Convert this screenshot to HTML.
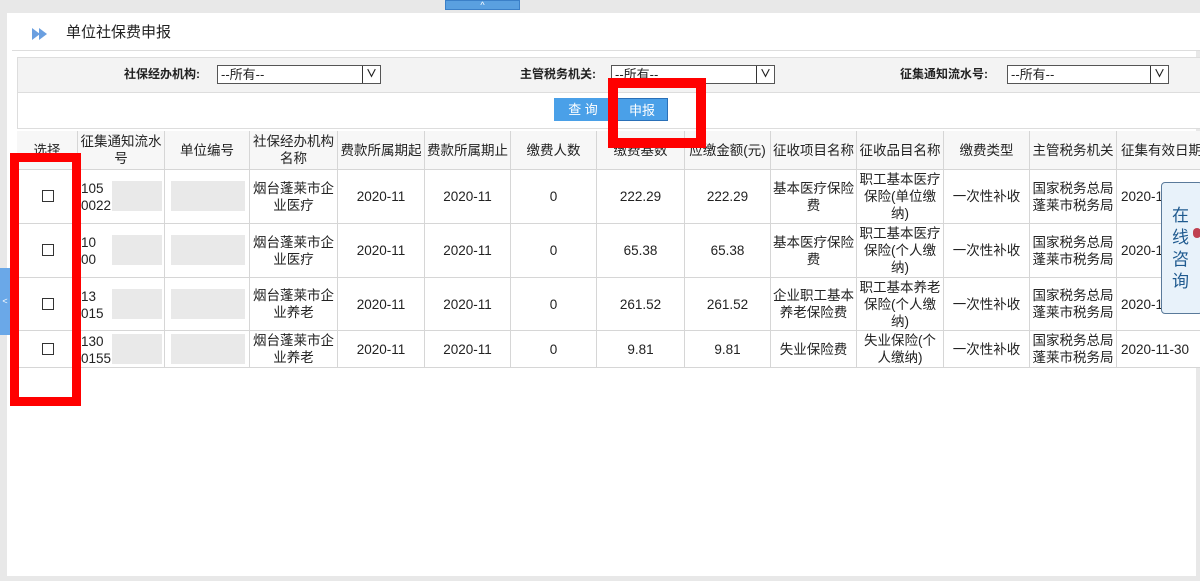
<!DOCTYPE html>
<html><head><meta charset="utf-8"><style>
*{margin:0;padding:0;box-sizing:border-box}
body{width:1200px;height:581px;overflow:hidden;background:#e8e8e8;position:relative;font-family:"Liberation Sans","Noto Sans CJK SC",sans-serif;color:#222}
.a{position:absolute}
.cell{position:absolute;display:flex;align-items:center;justify-content:center;text-align:center;font-size:13.5px;line-height:17px;border-right:1px solid #d6d6d6}
.blur{position:absolute;background:#e2e2e2;opacity:.75}
.sel{position:absolute;height:19px;border:1px solid #555;background:#fff;font-size:13px;line-height:17px;padding-left:3px}
.sel i{position:absolute;right:0;top:0;width:18px;height:17px;border-left:1px solid #333;font-style:normal;font-size:11px;text-align:center;line-height:17px;font-weight:bold}
.lbl{position:absolute;font-size:12px;font-weight:bold;line-height:19px}
.cb{position:absolute;width:12px;height:12px;border:1.5px solid #333;background:#fff}
</style></head><body>
<div class="a" style="left:445px;top:0;width:75px;height:10px;background:#5aa0e0;border:1px solid #3b80c8;color:#fff;font-size:9px;text-align:center;line-height:8px">^</div>
<div class="a" style="left:7px;top:13px;width:1189px;height:563px;background:#fff"></div>
<div class="a" style="left:12px;top:13px;width:1188px;height:38px;background:#fff;border-bottom:1px solid #ddd"></div>
<svg class="a" style="left:31px;top:27px" width="18" height="14"><path d="M1 1 L9 7 L1 13Z" fill="#6a9fe0"/><path d="M8 1 L16 7 L8 13Z" fill="#6a9fe0"/></svg>
<div class="a" style="left:66px;top:23px;font-size:15px;line-height:20px">单位社保费申报</div>
<div class="a" style="left:17px;top:57px;width:1183px;height:36px;background:#f3f3f3;border:1px solid #ddd;border-right:none"></div>
<div class="a" style="left:17px;top:93px;width:1183px;height:36px;background:#fff;border:1px solid #ddd;border-top:none;border-right:none"></div>
<div class="lbl" style="left:124px;top:65px">社保经办机构:</div>
<div class="sel" style="left:217px;top:65px;width:164px">--所有--<i>∨</i></div>
<div class="lbl" style="left:520px;top:65px">主管税务机关:</div>
<div class="sel" style="left:611px;top:65px;width:164px">--所有--<i>∨</i></div>
<div class="lbl" style="left:900px;top:65px">征集通知流水号:</div>
<div class="sel" style="left:1007px;top:65px;width:162px">--所有--<i>∨</i></div>
<div class="a" style="left:554px;top:98px;width:58px;height:23px;background:#4aa0e8;color:#fff;font-size:13px;text-align:center;line-height:23px">查 询</div>
<div class="a" style="left:616px;top:98px;width:52px;height:23px;background:#4aa0e8;color:#fff;font-size:13px;text-align:center;line-height:23px;border:1px solid #2a70b8">申报</div>
<div class="a" style="left:17px;top:131px;width:1183px;height:237px;border-top:1px solid #ccc"></div>
<div id="t"></div>
<script>
var xs=[17,78,165,250,338,425,511,597,685,771,857,944,1030,1117,1220];
var ys=[131,170,224,278,331,368];
var hd=["选择","征集通知流水<br>号","单位编号","社保经办机构<br>名称","费款所属期起","费款所属期止","缴费人数","缴费基数","应缴金额(元)","征收项目名称","征收品目名称","缴费类型","主管税务机关","征集有效日期"];
var rows=[
["","","","烟台蓬莱市企<br>业医疗","2020-11","2020-11","0","222.29","222.29","基本医疗保险<br>费","职工基本医疗<br>保险(单位缴<br>纳)","一次性补收","国家税务总局<br>蓬莱市税务局","2020-11-30"],
["","","","烟台蓬莱市企<br>业医疗","2020-11","2020-11","0","65.38","65.38","基本医疗保险<br>费","职工基本医疗<br>保险(个人缴<br>纳)","一次性补收","国家税务总局<br>蓬莱市税务局","2020-11-30"],
["","","","烟台蓬莱市企<br>业养老","2020-11","2020-11","0","261.52","261.52","企业职工基本<br>养老保险费","职工基本养老<br>保险(个人缴<br>纳)","一次性补收","国家税务总局<br>蓬莱市税务局","2020-11-30"],
["","","","烟台蓬莱市企<br>业养老","2020-11","2020-11","0","9.81","9.81","失业保险费","失业保险(个<br>人缴纳)","一次性补收","国家税务总局<br>蓬莱市税务局","2020-11-30"]];
var h="";
function row(cells,y0,y1,bg){for(var i=0;i<14;i++){h+='<div class="cell" style="left:'+xs[i]+'px;top:'+y0+'px;width:'+(xs[i+1]-xs[i])+'px;height:'+(y1-y0)+'px;border-bottom:1px solid #d6d6d6;background:'+bg+';justify-content:'+(i==13?'flex-start;padding-left:4px;white-space:nowrap':'center')+'">'+cells[i]+'</div>';}}
row(hd,131,170,"#f7f7f7");
for(var r=0;r<4;r++){row(rows[r],ys[r+1],ys[r+2],"#fff");
var yc=(ys[r+1]+ys[r+2])/2;
h+='<div class="cb" style="left:42px;top:'+(yc-7)+'px"></div>';
var ids=[["105","0022"],["10","00"],["13","015"],["130","0155"]][r];
h+='<div class="a" style="left:81px;top:'+(yc-17)+'px;font-size:13.5px;line-height:17px">'+ids[0]+'<br>'+ids[1]+'</div>';
h+='<div class="blur" style="left:112px;top:'+(yc-16)+'px;width:50px;height:30px"></div>';
h+='<div class="blur" style="left:171px;top:'+(yc-16)+'px;width:74px;height:30px"></div>';}
document.getElementById("t").outerHTML=h;
</script>
<div class="a" style="left:10px;top:153px;width:71px;height:253px;border:9px solid #f00"></div>
<div class="a" style="left:608px;top:78px;width:98px;height:70px;border:10px solid #f00"></div>
<div class="a" style="left:0;top:268px;width:10px;height:67px;background:#6aa8e8;color:#fff;font-size:9px;line-height:67px;text-align:center">&lt;</div>
<div class="a" style="left:1161px;top:182px;width:42px;height:132px;background:#e8f2fa;border:1px solid #5a7a9a;border-radius:4px;color:#1f5a8f;font-size:17px;line-height:22px;padding:22px 0 0 10px">在<br>线<br>咨<br>询</div>
<div class="a" style="left:1193px;top:228px;width:8px;height:10px;background:#c04050;border-radius:4px"></div>
</body></html>
